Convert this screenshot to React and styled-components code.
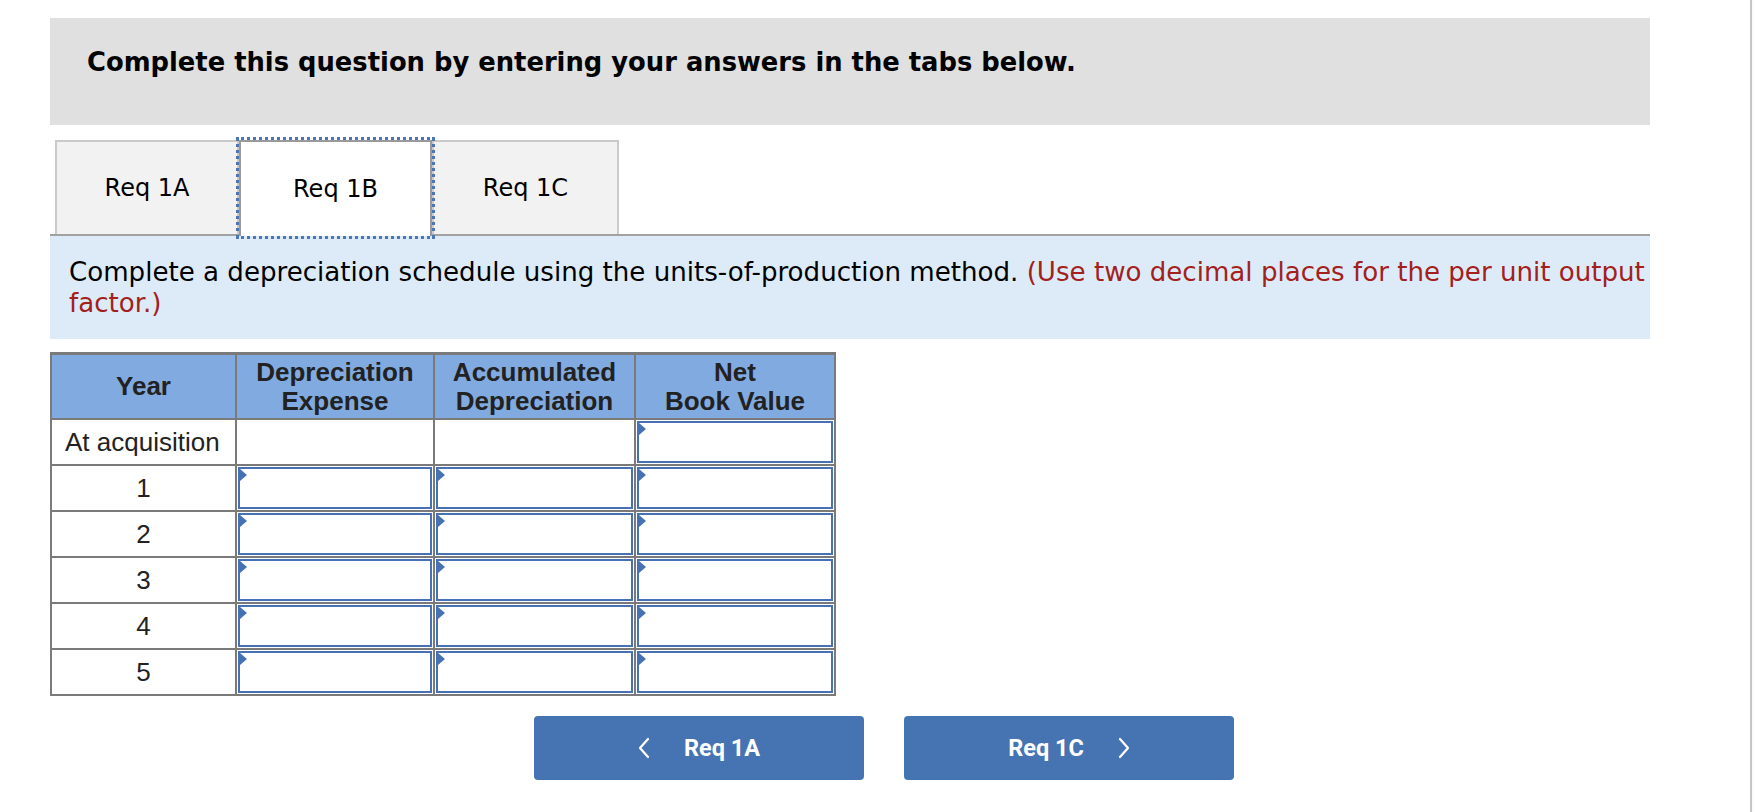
import React from "react";
import styled, { createGlobalStyle } from "styled-components";

const GlobalStyle = createGlobalStyle`
    html, body {
        margin: 0;
        padding: 0;
        background: #ffffff;
    }
    body {
        font-family: "DejaVu Sans", Verdana, sans-serif;
        color: #000;
    }
`;

const Page = styled.div`
    display: flex;
    width: 1754px;
    height: 812px;
    overflow: hidden;
`;

const Main = styled.div`
    width: 1750px;
    padding: 18px 0 0 50px;
    box-sizing: border-box;
`;

const Edge = styled.div`
    flex: 1;
    border-left: 2px solid #c6c6c6;
    background: #fafafa;
`;

const Column = styled.div`
    width: 1600px;
`;

const Banner = styled.div`
    height: 107px;
    box-sizing: border-box;
    padding: 28px 0 0 37px;
    background: #e0e0e0;
    font-weight: bold;
    font-size: 25.8px;
    line-height: 32px;
`;

const TabRow = styled.div`
    display: flex;
    align-items: flex-end;
    margin-top: 15px;
    padding-left: 5px;
    border-bottom: 2px solid #a2a2a2;
`;

const Tab = styled.div`
    width: ${(p) => p.$w}px;
    box-sizing: border-box;
    display: flex;
    align-items: center;
    justify-content: center;
    font-size: 24px;
    background: ${(p) => (p.$active ? "#ffffff" : "#f2f2f2")};
    border: 2px solid ${(p) => (p.$active ? "#9a9a9a" : "#cacaca")};
    border-bottom: none;
    outline: ${(p) => (p.$active ? "3px dotted #4a76b8" : "none")};
    outline-offset: 0;
    position: relative;
    z-index: ${(p) => (p.$active ? 1 : 0)};
    margin-bottom: ${(p) => (p.$active ? "-2px" : "0")};
    height: ${(p) => (p.$active ? "96px" : "94px")};
`;

const Instructions = styled.div`
    background: #ddebf8;
    padding: 21px 0 20px 19px;
    font-size: 26.1px;
    line-height: 31px;
    white-space: nowrap;
`;

const Note = styled.span`
    color: #a3201c;
`;

const Table = styled.table`
    margin-top: 13px;
    border-collapse: collapse;
    font-family: "Liberation Sans", Arial, sans-serif;
    font-size: 26px;
    color: #222;
`;

const HeadCell = styled.th`
    width: ${(p) => p.$w}px;
    height: 63px;
    background: #81abe0;
    border: 2px solid #7a7a7a;
    border-top-width: 3px;
    font-weight: bold;
    line-height: 29px;
    padding: 0;
`;

const YearCell = styled.td`
    height: 44px;
    border: 2px solid #7a7a7a;
    text-align: ${(p) => (p.$left ? "left" : "center")};
    padding: 0 0 0 ${(p) => (p.$left ? "13px" : "0")};
    line-height: 28px;
`;

const EntryCell = styled.td`
    height: 44px;
    border: 2px solid #7a7a7a;
    padding: 1px;
    box-sizing: border-box;
`;

const InputBox = styled.div`
    position: relative;
    height: 38px;
    border: 2px solid #4671b2;
    background: #fff;

    &::before {
        content: "";
        position: absolute;
        left: 0;
        top: 0;
        border-top: 6px solid transparent;
        border-bottom: 6px solid transparent;
        border-left: 7px solid #4671b2;
    }
`;

const Nav = styled.div`
    display: flex;
    gap: 40px;
    margin-top: 20px;
    padding-left: 484px;
`;

const NavButton = styled.button`
    width: 330px;
    height: 64px;
    border: none;
    border-radius: 4px;
    background: #4674b3;
    color: #fff;
    display: flex;
    align-items: center;
    justify-content: center;
    gap: 34px;
    font-family: Roboto, "Liberation Sans", sans-serif;
    font-weight: bold;
    font-size: 23.5px;
    cursor: pointer;
`;

const Chevron = ({ dir }) => (
    <svg width="12" height="22" viewBox="0 0 12 22" fill="none">
        <path
            d={dir === "left" ? "M10 2 L2 11 L10 20" : "M2 2 L10 11 L2 20"}
            stroke="#fff"
            strokeWidth="2.2"
            strokeLinecap="round"
            strokeLinejoin="round"
        />
    </svg>
);

const years = [1, 2, 3, 4, 5];

function App() {
    return (
        <Page>
            <GlobalStyle />
            <Main>
                <Column>
                    <Banner>Complete this question by entering your answers in the tabs below.</Banner>
                    <TabRow>
                        <Tab $w={184}>Req 1A</Tab>
                        <Tab $w={193} $active>
                            Req 1B
                        </Tab>
                        <Tab $w={187}>Req 1C</Tab>
                    </TabRow>
                    <Instructions>
                        Complete a depreciation schedule using the units-of-production method.{" "}
                        <Note>
                            (Use two decimal places for the per unit output
                            <br />
                            factor.)
                        </Note>
                    </Instructions>
                    <Table>
                        <thead>
                            <tr>
                                <HeadCell $w={183}>Year</HeadCell>
                                <HeadCell $w={196}>
                                    Depreciation
                                    <br />
                                    Expense
                                </HeadCell>
                                <HeadCell $w={199}>
                                    Accumulated
                                    <br />
                                    Depreciation
                                </HeadCell>
                                <HeadCell $w={198}>
                                    Net
                                    <br />
                                    Book Value
                                </HeadCell>
                            </tr>
                        </thead>
                        <tbody>
                            <tr>
                                <YearCell $left>At acquisition</YearCell>
                                <YearCell />
                                <YearCell />
                                <EntryCell>
                                    <InputBox />
                                </EntryCell>
                            </tr>
                            {years.map((y) => (
                                <tr key={y}>
                                    <YearCell>{y}</YearCell>
                                    <EntryCell>
                                        <InputBox />
                                    </EntryCell>
                                    <EntryCell>
                                        <InputBox />
                                    </EntryCell>
                                    <EntryCell>
                                        <InputBox />
                                    </EntryCell>
                                </tr>
                            ))}
                        </tbody>
                    </Table>
                    <Nav>
                        <NavButton>
                            <Chevron dir="left" />
                            Req 1A
                        </NavButton>
                        <NavButton>
                            Req 1C
                            <Chevron dir="right" />
                        </NavButton>
                    </Nav>
                </Column>
            </Main>
            <Edge />
        </Page>
    );
}

export default App;
